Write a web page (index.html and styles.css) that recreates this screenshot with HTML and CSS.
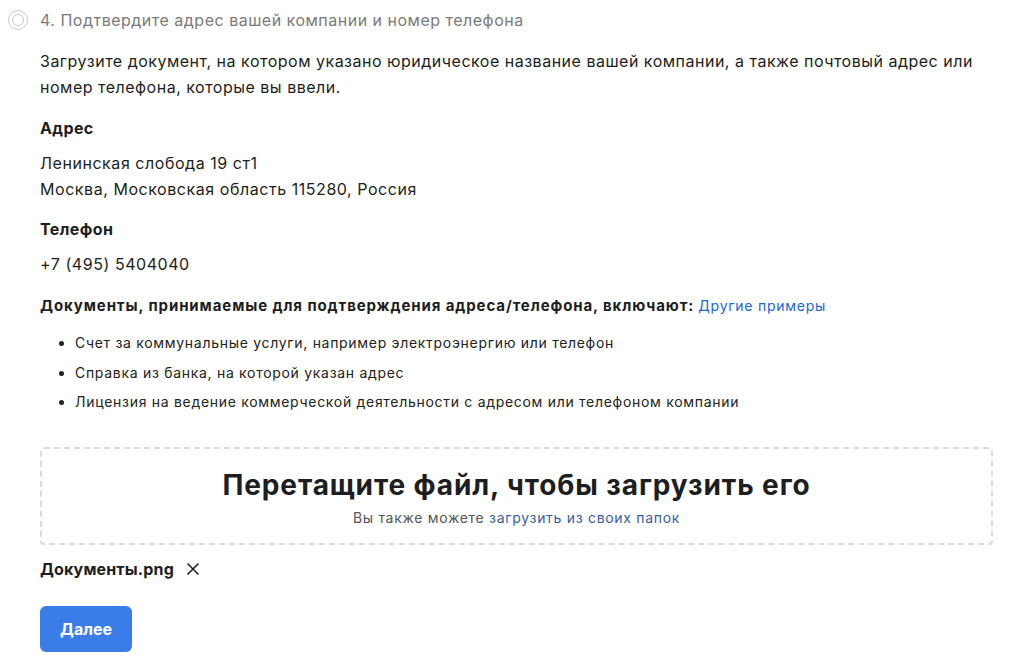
FILE: index.html
```html
<!DOCTYPE html>
<html lang="ru">
<head>
<meta charset="utf-8">
<link rel="stylesheet" href="styles.css">
</head>
<body>
<div class="page">
  <div class="step-head">
    <span class="radio"><span class="radio-inner"></span></span>
    <span class="step-title">4. Подтвердите адрес вашей компании и номер телефона</span>
  </div>
  <div class="content">
    <p class="intro">Загрузите документ, на котором указано юридическое название вашей компании, а также почтовый адрес или номер телефона, которые вы ввели.</p>
    <h3 class="label label-first">Адрес</h3>
    <p class="value">Ленинская слобода 19 ст1<br>Москва, Московская область 115280, Россия</p>
    <h3 class="label">Телефон</h3>
    <p class="value">+7 (495) 5404040</p>
    <p class="docs"><strong>Документы, принимаемые для подтверждения адреса/телефона, включают:</strong> <a class="link" href="#">Другие примеры</a></p>
    <ul class="list">
      <li>Счет за коммунальные услуги, например электроэнергию или телефон</li>
      <li>Справка из банка, на которой указан адрес</li>
      <li>Лицензия на ведение коммерческой деятельности с адресом или телефоном компании</li>
    </ul>
    <div class="drop">
      <div class="drop-title">Перетащите файл, чтобы загрузить его</div>
      <div class="drop-sub">Вы также можете <a class="drop-link" href="#">загрузить из своих папок</a></div>
    </div>
    <div class="file">
      <span class="file-name">Документы.png</span>
      <svg class="close" width="14" height="14" viewBox="0 0 14 14"><path d="M1.5 1.5 L12.5 12.5 M12.5 1.5 L1.5 12.5" stroke="#222" stroke-width="1.6" fill="none"/></svg>
    </div>
    <button class="btn">Далее</button>
  </div>
</div>
</body>
</html>
```

FILE: styles.css
```css
* { box-sizing: border-box; }
html, body { margin: 0; padding: 0; background: #fff; }
body { font-family: Inter, Roboto, "Noto Sans", Arial, sans-serif; color: #1c1e21; }
.page { padding: 8px 0 0 8px; width: 1024px; }
.step-head { display: flex; align-items: center; height: 24px; }
.radio { width: 20px; height: 20px; border: 1.5px solid #c8c8c8; border-radius: 50%; display: flex; align-items: center; justify-content: center; }
.radio-inner { width: 12px; height: 12px; border: 1.5px solid #c8c8c8; border-radius: 50%; }
.step-title { margin-left: 12px; font-size: 16px; color: #7a7a7a; letter-spacing: 0.5px; }
.content { padding-left: 32px; width: 985px; }
.intro { margin: 16px 0 0; font-size: 16px; line-height: 26px; color: #1c1e21; letter-spacing: 0.5px; }
.label { margin: 16px 0 0; font-size: 16px; font-weight: 700; line-height: 22px; letter-spacing: 0.4px; }
.label-first { margin-top: 17px; }
.value { margin: 11px 0 0; font-size: 16px; line-height: 26px; letter-spacing: 0.55px; }
.docs { margin: 18px 0 0; font-size: 15px; line-height: 22px; }
.docs strong { font-weight: 700; letter-spacing: 0.9px; }
.link { color: #1a66d9; text-decoration: none; font-size: 14px; letter-spacing: 0.75px; }
.list { margin: 11px 0 0; padding-left: 35px; font-size: 14px; line-height: 29.5px; color: #222; letter-spacing: 0.7px; }
.drop { margin-top: 30px; border: 2px dashed #dcdcdc; border-radius: 4px; height: 98px; display: flex; flex-direction: column; align-items: center; padding-top: 18px; }
.drop-title { font-weight: 700; font-size: 28px; line-height: 36px; color: #1c1e21; letter-spacing: 0.9px; }
.drop-sub { margin-top: 6px; font-size: 14px; line-height: 18px; color: #555; letter-spacing: 0.7px; }
.drop-link { color: #3b5da0; text-decoration: none; }
.file { display: flex; align-items: center; margin-top: 12px; height: 24px; }
.file-name { font-size: 16px; font-weight: 700; letter-spacing: 0.15px; }
.close { margin-left: 12px; }
.btn { margin-top: 25px; width: 92px; height: 46px; border: none; border-radius: 6px; background: #3b7de8; color: #fff; font-family: inherit; font-size: 16px; font-weight: 700; }
```
